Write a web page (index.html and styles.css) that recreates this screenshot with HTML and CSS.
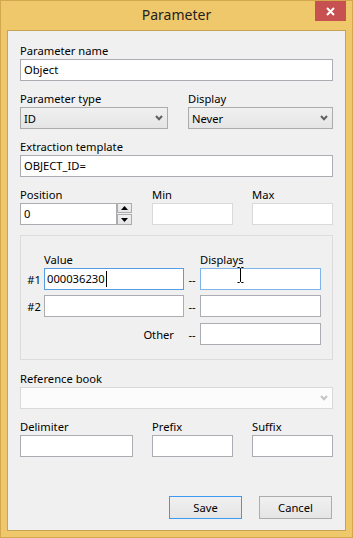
FILE: index.html
```html
<!DOCTYPE html>
<html lang="en">
<head>
    <meta charset="UTF-8">
    <meta name="viewport" content="width=device-width, initial-scale=1.0">
    <title>Parameter</title>
    <link rel="stylesheet" href="styles.css">
</head>
<body>

    <div class="window">
        <!-- Заголовок вікна -->
        <div class="titlebar">
            <span class="title">Parameter</span>
            <div class="close">
                <svg width="9" height="9" viewBox="0 0 9 9"><path d="M1 1L8 8M8 1L1 8" stroke="#fff" stroke-width="2"/></svg>
            </div>
        </div>

        <div class="client">
            <div class="field">
                <label>Parameter name</label>
                <div class="box">Object</div>
            </div>

            <div class="row row-two">
                <div class="field">
                    <label>Parameter type</label>
                    <div class="combo">
                        <span>ID</span>
                        <svg class="chevron" width="8" height="6" viewBox="0 0 8 6"><path d="M1 1L4 4.2L7 1" fill="none" stroke="#5f5f5f" stroke-width="2"/></svg>
                    </div>
                </div>
                <div class="field">
                    <label>Display</label>
                    <div class="combo">
                        <span>Never</span>
                        <svg class="chevron" width="8" height="6" viewBox="0 0 8 6"><path d="M1 1L4 4.2L7 1" fill="none" stroke="#5f5f5f" stroke-width="2"/></svg>
                    </div>
                </div>
            </div>

            <div class="field">
                <label>Extraction template</label>
                <div class="box">OBJECT_ID=</div>
            </div>

            <div class="row row-three">
                <div class="field">
                    <label>Position</label>
                    <div class="spin">
                        <div class="box spin-box">0</div>
                        <div class="spin-buttons">
                            <div class="spin-btn"><svg width="7" height="4" viewBox="0 0 7 4"><path d="M0 4L3.5 0L7 4Z" fill="#000"/></svg></div>
                            <div class="spin-btn spin-down"><svg width="7" height="4" viewBox="0 0 7 4"><path d="M0 0L3.5 4L7 0Z" fill="#000"/></svg></div>
                        </div>
                    </div>
                </div>
                <div class="field">
                    <label>Min</label>
                    <div class="box disabled"></div>
                </div>
                <div class="field">
                    <label>Max</label>
                    <div class="box disabled"></div>
                </div>
            </div>

            <!-- Значення -->
            <div class="group">
                <div class="vrow vhead">
                    <span></span>
                    <label>Value</label>
                    <span></span>
                    <label>Displays</label>
                </div>
                <div class="vrow">
                    <span class="num">#1</span>
                    <div class="box focus">000036230<i class="caret"></i></div>
                    <span class="dash">--</span>
                    <div class="box hover">
                        <svg class="ibeam" width="7" height="16" viewBox="0 0 7 16"><path d="M0.5 0.5H2.5L3.5 1.5L4.5 0.5H6.5M3.5 1.5V14.5M0.5 15.5H2.5L3.5 14.5L4.5 15.5H6.5" fill="none" stroke="#000" stroke-width="1"/></svg>
                    </div>
                </div>
                <div class="vrow">
                    <span class="num">#2</span>
                    <div class="box"></div>
                    <span class="dash">--</span>
                    <div class="box"></div>
                </div>
                <div class="vrow vlast">
                    <span></span>
                    <span class="other">Other</span>
                    <span class="dash">--</span>
                    <div class="box"></div>
                </div>
            </div>

            <div class="field field-ref">
                <label>Reference book</label>
                <div class="combo disabled">
                    <span></span>
                    <svg class="chevron" width="8" height="6" viewBox="0 0 8 6"><path d="M1 1L4 4.2L7 1" fill="none" stroke="#c4c4c4" stroke-width="2"/></svg>
                </div>
            </div>

            <div class="row row-three">
                <div class="field">
                    <label>Delimiter</label>
                    <div class="box"></div>
                </div>
                <div class="field">
                    <label>Prefix</label>
                    <div class="box"></div>
                </div>
                <div class="field">
                    <label>Suffix</label>
                    <div class="box"></div>
                </div>
            </div>

            <div class="buttons">
                <button class="btn btn-default">Save</button>
                <button class="btn">Cancel</button>
            </div>
        </div>
    </div>

</body>
</html>
```

FILE: styles.css
```css
* {
    box-sizing: border-box;
}

body {
    margin: 0;
    font-family: "Noto Sans", "Open Sans", sans-serif;
    font-size: 11.2px;
    color: #000;
}

.window {
    position: relative;
    width: 353px;
    height: 538px;
    display: flex;
    flex-direction: column;
    padding: 0 6px 6px;
    background-color: #f0c86c;
    border: 1px solid #d2a74e;
}

.titlebar {
    flex-shrink: 0;
    height: 29px;
    display: flex;
    align-items: center;
    justify-content: center;
}

.title {
    font-size: 14px;
    color: #222;
    margin-top: -2px;
}

.close {
    position: absolute;
    top: 0;
    right: 6px;
    width: 31px;
    height: 20px;
    display: flex;
    align-items: center;
    justify-content: center;
    background-color: #c75050;
}

.client {
    flex: 1;
    display: flex;
    flex-direction: column;
    padding: 12px 12px 11px;
    background-color: #f0f0f0;
    border: 1px solid #c9a354;
}

.client > * + * {
    margin-top: 10px;
}

.client > .field-ref {
    margin-top: 11px;
}

.field {
    display: flex;
    flex-direction: column;
}

.field label {
    height: 16px;
    line-height: 16px;
}

.row {
    display: grid;
}

.row-two {
    grid-template-columns: 148px 1fr;
    column-gap: 20px;
}

.row-three {
    grid-template-columns: 113px 1fr 1fr;
    column-gap: 19px;
}

.box {
    position: relative;
    height: 22px;
    line-height: 20px;
    padding: 0 3px;
    background-color: #fff;
    border: 1px solid #abadb3;
    white-space: nowrap;
}

.box.disabled {
    border-color: #d9d9d9;
}

.box.focus {
    border-color: #569de5;
    padding-left: 2px;
}

.box.hover {
    border-color: #7eb4ea;
}

.caret {
    display: inline-block;
    width: 1px;
    height: 16px;
    margin-left: 1px;
    vertical-align: -4px;
    background-color: #000;
}

.ibeam {
    position: absolute;
    left: 36px;
    top: -2px;
}

.combo {
    height: 22px;
    display: flex;
    align-items: center;
    justify-content: space-between;
    padding: 0 4px 0 3px;
    background: linear-gradient(#f0f0f0, #e5e5e5);
    border: 1px solid #acacac;
}

.combo.disabled {
    background: #fcfcfc;
    border-color: #d9d9d9;
}

.spin {
    display: flex;
}

.spin-box {
    width: 97px;
}

.spin-buttons {
    display: flex;
    flex-direction: column;
    width: 15px;
}

.spin-btn {
    height: 10px;
    display: flex;
    align-items: center;
    justify-content: center;
    background: linear-gradient(#f0f0f0, #e5e5e5);
    border: 1px solid #acacac;
}

.spin-down {
    height: 11px;
    margin-top: 1px;
}

.group {
    display: flex;
    flex-direction: column;
    padding: 16px 11px 14px 0;
    border: 1px solid #dcdcdc;
}

.vrow {
    display: grid;
    grid-template-columns: 23px 140px 16px 121px;
    align-items: center;
}

.vhead {
    height: 16px;
    line-height: 16px;
}

.vrow + .vrow {
    margin-top: 5px;
}

.vhead + .vrow {
    margin-top: 0;
}

.vrow.vlast {
    margin-top: 6px;
}

.num {
    text-align: right;
    padding-right: 3px;
}

.dash {
    text-align: center;
}

.other {
    text-align: right;
    padding-right: 10px;
}

.client > .buttons {
    display: flex;
    justify-content: flex-end;
    gap: 17px;
    margin-top: 39px;
    margin-right: 1px;
}

.btn {
    width: 73px;
    height: 23px;
    padding: 0;
    font-family: inherit;
    font-size: 11.2px;
    color: #000;
    background: linear-gradient(#f0f0f0, #e5e5e5);
    border: 1px solid #acacac;
}

.btn-default {
    border-color: #3c9af0;
}
```
